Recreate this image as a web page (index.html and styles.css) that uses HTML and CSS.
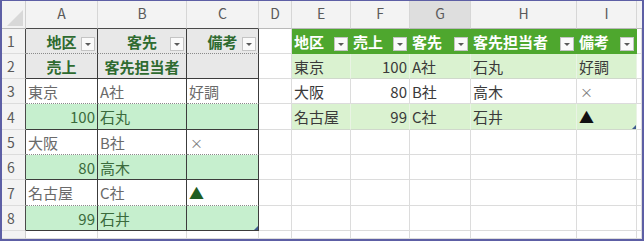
FILE: index.html
```html
<!DOCTYPE html>
<html lang="ja">
<head>
<meta charset="utf-8">
<title>Sheet</title>
<link rel="stylesheet" href="styles.css">
</head>
<body>
<div class="sheet">
  <!-- column headers -->
  <div class="c corner"><span class="corner-tri"></span></div>
  <div class="c ch ch-dark">A</div>
  <div class="c ch ch-dark">B</div>
  <div class="c ch ch-dark">C</div>
  <div class="c ch">D</div>
  <div class="c ch">E</div>
  <div class="c ch">F</div>
  <div class="c ch ch-sel">G</div>
  <div class="c ch">H</div>
  <div class="c ch">I</div>
  <div class="c ch ch-end"></div>

  <!-- row 1 -->
  <div class="c rh rh-t">1</div>
  <div class="c lt lh dash">地区<span class="dd"></span></div>
  <div class="c lt lh dash">客先<span class="dd"></span></div>
  <div class="c lt lh dash">備考<span class="dd"></span></div>
  <div class="c"></div>
  <div class="c gh">地区<span class="dd"></span></div>
  <div class="c gh">売上<span class="dd"></span></div>
  <div class="c gh">客先<span class="dd"></span></div>
  <div class="c gh">客先担当者<span class="dd"></span></div>
  <div class="c gh">備考<span class="dd"></span></div>
  <div class="c"></div>

  <!-- row 2 -->
  <div class="c rh rh-t">2</div>
  <div class="c lt lh solid">売上</div>
  <div class="c lt lh solid">客先担当者</div>
  <div class="c lt lh solid"></div>
  <div class="c"></div>
  <div class="c rg">東京</div>
  <div class="c rg num">100</div>
  <div class="c rg">A社</div>
  <div class="c rg">石丸</div>
  <div class="c rg">好調</div>
  <div class="c"></div>

  <!-- row 3 -->
  <div class="c rh rh-t">3</div>
  <div class="c lt lw dash">東京</div>
  <div class="c lt lw dash">A社</div>
  <div class="c lt lw dash">好調</div>
  <div class="c"></div>
  <div class="c rw">大阪</div>
  <div class="c rw num">80</div>
  <div class="c rw">B社</div>
  <div class="c rw">高木</div>
  <div class="c rw mark">×</div>
  <div class="c"></div>

  <!-- row 4 -->
  <div class="c rh rh-t">4</div>
  <div class="c lt lg solid num">100</div>
  <div class="c lt lg solid">石丸</div>
  <div class="c lt lg solid"></div>
  <div class="c"></div>
  <div class="c rg">名古屋</div>
  <div class="c rg num">99</div>
  <div class="c rg">C社</div>
  <div class="c rg">石井</div>
  <div class="c rg tri-black">▲<span class="handle"></span></div>
  <div class="c"></div>

  <!-- row 5 -->
  <div class="c rh rh-t">5</div>
  <div class="c lt lw dash">大阪</div>
  <div class="c lt lw dash">B社</div>
  <div class="c lt lw dash mark">×</div>
  <div class="c"></div>
  <div class="c"></div>
  <div class="c"></div>
  <div class="c"></div>
  <div class="c"></div>
  <div class="c"></div>
  <div class="c"></div>

  <!-- row 6 -->
  <div class="c rh rh-t">6</div>
  <div class="c lt lg solid num">80</div>
  <div class="c lt lg solid">高木</div>
  <div class="c lt lg solid"></div>
  <div class="c"></div>
  <div class="c"></div>
  <div class="c"></div>
  <div class="c"></div>
  <div class="c"></div>
  <div class="c"></div>
  <div class="c"></div>

  <!-- row 7 -->
  <div class="c rh rh-t">7</div>
  <div class="c lt lw dash">名古屋</div>
  <div class="c lt lw dash">C社</div>
  <div class="c lt lw dash tri-green">▲</div>
  <div class="c"></div>
  <div class="c"></div>
  <div class="c"></div>
  <div class="c"></div>
  <div class="c"></div>
  <div class="c"></div>
  <div class="c"></div>

  <!-- row 8 -->
  <div class="c rh rh-t">8</div>
  <div class="c lt lg solid num">99</div>
  <div class="c lt lg solid">石井</div>
  <div class="c lt lg solid"><span class="handle"></span></div>
  <div class="c"></div>
  <div class="c"></div>
  <div class="c"></div>
  <div class="c"></div>
  <div class="c"></div>
  <div class="c"></div>
  <div class="c"></div>

  <!-- row 9 (partial, cut by window) -->
  <div class="c rh"></div>
  <div class="c"></div>
  <div class="c"></div>
  <div class="c"></div>
  <div class="c"></div>
  <div class="c"></div>
  <div class="c"></div>
  <div class="c"></div>
  <div class="c"></div>
  <div class="c"></div>
  <div class="c"></div>
</div>
</body>
</html>
```

FILE: styles.css
```css
html, body {
  margin: 0;
  padding: 0;
  background: #ffffff;
}

.sheet {
  width: 644px;
  height: 241px;
  box-sizing: border-box;
  border: 2px solid #5d5fa5;
  border-top-width: 1px;
  overflow: hidden;
  display: grid;
  grid-template-columns: 24px 72px 89px 72px 33px 59px 59px 61px 106px 60px 1fr;
  grid-template-rows: 28px 25px 25px 25px 26px 25px 25px 26px 25px 1fr;
  font-family: "Noto Sans CJK JP", "Noto Sans", sans-serif;
  font-size: 15px;
  line-height: 1;
  color: #404040;
}

.c {
  position: relative;
  box-sizing: border-box;
  border-right: 1px solid #dcdcdc;
  border-bottom: 1px solid #dcdcdc;
  display: flex;
  align-items: center;
  padding: 0 2px;
  white-space: nowrap;
  overflow: hidden;
  min-width: 0;
  min-height: 0;
}

/* headers */
.corner {
  background: #f3f3f3;
  border-right-color: #cfcfcf;
  border-bottom-color: #b9b9b9;
}
.corner-tri {
  position: absolute;
  right: 2px;
  bottom: 2px;
  width: 0;
  height: 0;
  border-left: 16px solid transparent;
  border-bottom: 16px solid #d8d8d8;
}

.ch {
  background: #f3f3f3;
  color: #5a5a5a;
  font-size: 14px;
  justify-content: center;
  padding-bottom: 3px;
  border-right-color: #d6d6d6;
  border-bottom-color: #b9b9b9;
}
.ch-dark {
  border-bottom-color: #4a4a4a;
}
.ch-sel {
  background: #dedede;
}
.ch-end {
  border-right: none;
}

.rh {
  background: #f3f3f3;
  color: #5a5a5a;
  font-size: 14px;
  padding-left: 5px;
  border-right-color: #cfcfcf;
  border-bottom-color: #dcdcdc;
}
.rh-t {
  border-right-color: #4a4a4a;
}

/* left table */
.lt {
  border-right: 1px solid #3c3c3c;
}
.lh {
  background: #e8e8e8;
  color: #2f6b30;
  font-weight: bold;
  justify-content: center;
}
.lw {
  background: #ffffff;
  color: #6a6a6a;
}
.lg {
  background: #c6efce;
  color: #3b6b3c;
}
.dash {
  border-bottom: 1px dotted #8a8a8a;
}
.solid {
  border-bottom: 1px solid #3c3c3c;
}

/* right table */
.gh {
  background: #4ea72e;
  color: #ffffff;
  font-weight: bold;
  border-right-color: #4ea72e;
  border-bottom-color: #4ea72e;
}
.rg {
  background: #daf2d0;
  color: #3a3a3a;
  border-right-color: #e9f3e4;
  border-bottom-color: #d0d8cc;
}
.rw {
  background: #ffffff;
  color: #3a3a3a;
}

.num {
  justify-content: flex-end;
  padding-right: 2px;
}

.mark {
  color: #7a7a7a;
  font-size: 13px;
  padding-left: 3px;
}
.tri-green {
  color: #1f5d22;
  padding-left: 2px;
}
.tri-black {
  color: #111111;
  padding-left: 2px;
}

/* dropdown button */
.dd {
  position: absolute;
  right: 2px;
  bottom: 2px;
  width: 14px;
  height: 14px;
  box-sizing: border-box;
  border: 1px solid #c4c4c4;
  background: #fafafa;
}
.dd::after {
  content: "";
  position: absolute;
  left: 3px;
  top: 5px;
  width: 0;
  height: 0;
  border-left: 3px solid transparent;
  border-right: 3px solid transparent;
  border-top: 3px solid #5a5a5a;
}

/* table resize handle */
.handle {
  position: absolute;
  right: 0;
  bottom: 0;
  width: 0;
  height: 0;
  border-left: 4px solid transparent;
  border-bottom: 4px solid #3d5a8e;
}
```
